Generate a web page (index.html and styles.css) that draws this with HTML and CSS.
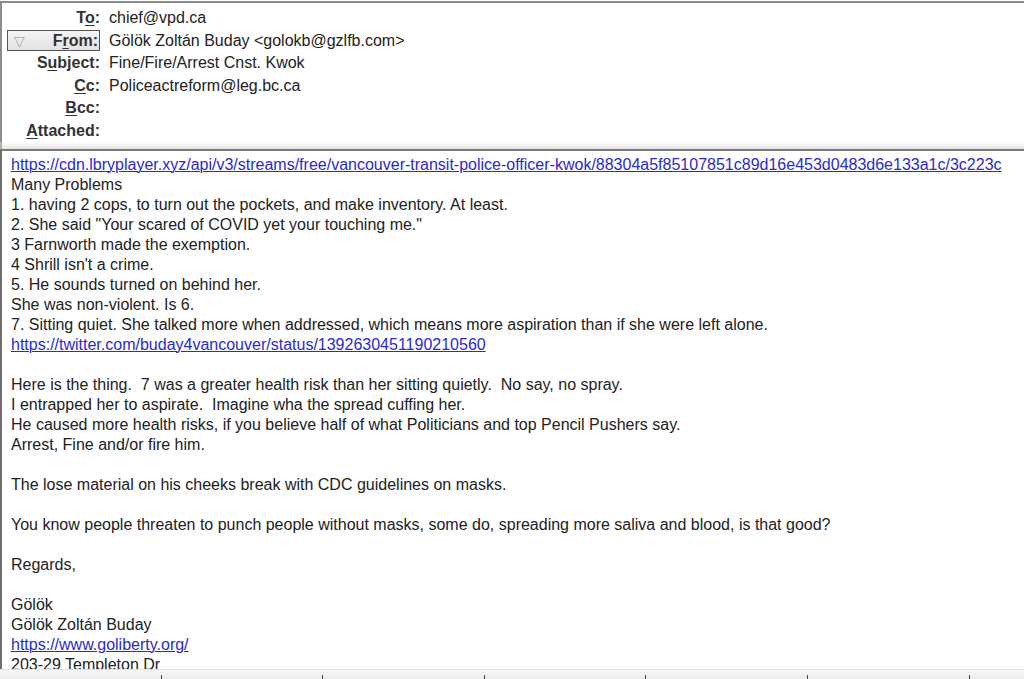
FILE: index.html
```html
<!DOCTYPE html>
<html>
<head>
<meta charset="utf-8">
<link rel="stylesheet" href="styles.css">
</head>
<body>
<div class="page">
  <div class="header">
    <div class="row"><div class="label">T<u>o</u>:</div><div class="value">chief@vpd.ca</div></div>
    <div class="row"><div class="label from"><span class="tri">&#9661;</span><span>F<u>r</u>om:</span></div><div class="value">Gölök Zoltán Buday &lt;golokb@gzlfb.com&gt;</div></div>
    <div class="row"><div class="label">S<u>u</u>bject:</div><div class="value">Fine/Fire/Arrest Cnst. Kwok</div></div>
    <div class="row"><div class="label"><u>C</u>c:</div><div class="value">Policeactreform@leg.bc.ca</div></div>
    <div class="row"><div class="label"><u>B</u>cc:</div><div class="value"></div></div>
    <div class="row"><div class="label"><u>A</u>ttached:</div><div class="value"></div></div>
  </div>
  <div class="sep"></div>
  <div class="body">
    <div class="line"><a class="link">https://cdn.lbryplayer.xyz/api/v3/streams/free/vancouver-transit-police-officer-kwok/88304a5f85107851c89d16e453d0483d6e133a1c/3c223c</a></div>
    <div class="line">Many Problems</div>
    <div class="line">1. having 2 cops, to turn out the pockets, and make inventory. At least.</div>
    <div class="line">2. She said "Your scared of COVID yet your touching me."</div>
    <div class="line">3 Farnworth made the exemption.</div>
    <div class="line">4 Shrill isn't a crime.</div>
    <div class="line">5. He sounds turned on behind her.</div>
    <div class="line">She was non-violent. Is 6.</div>
    <div class="line">7. Sitting quiet. She talked more when addressed, which means more aspiration than if she were left alone.</div>
    <div class="line"><a class="link">https://twitter.com/buday4vancouver/status/1392630451190210560</a></div>
    <div class="line"></div>
    <div class="line">Here is the thing.&nbsp; 7 was a greater health risk than her sitting quietly.&nbsp; No say, no spray.</div>
    <div class="line">I entrapped her to aspirate.&nbsp; Imagine wha the spread cuffing her.</div>
    <div class="line">He caused more health risks, if you believe half of what Politicians and top Pencil Pushers say.</div>
    <div class="line">Arrest, Fine and/or fire him.</div>
    <div class="line"></div>
    <div class="line">The lose material on his cheeks break with CDC guidelines on masks.</div>
    <div class="line"></div>
    <div class="line">You know people threaten to punch people without masks, some do, spreading more saliva and blood, is that good?</div>
    <div class="line"></div>
    <div class="line">Regards,</div>
    <div class="line"></div>
    <div class="line">Gölök</div>
    <div class="line">Gölök Zoltán Buday</div>
    <div class="line"><a class="link">https://www.goliberty.org/</a></div>
    <div class="line">203-29 Templeton Dr</div>
  </div>
  <div class="status">
    <div class="seg"><span class="tick"></span></div>
    <div class="seg"><span class="tick"></span></div>
    <div class="seg"><span class="tick"></span></div>
    <div class="seg"><span class="tick"></span></div>
    <div class="seg"><span class="tick"></span></div>
    <div class="seg"><span class="tick"></span></div>
    <div class="seg"></div>
  </div>
</div>
</body>
</html>
```
FILE: styles.css
```css
html, body {
  margin: 0;
  padding: 0;
  background: #ffffff;
}
.page {
  width: 1024px;
  height: 679px;
  overflow: hidden;
  display: flex;
  flex-direction: column;
  padding-top: 1px;
  box-sizing: border-box;
  font-family: "Liberation Sans", Arial, sans-serif;
  font-size: 16px;
  color: #222;
}
.header {
  height: 141px;
  box-sizing: border-box;
  border-top: 2px solid #8c8c8c;
  border-left: 2px solid #8c8c8c;
  padding-top: 4px;
  flex: 0 0 auto;
}
.row {
  display: flex;
  height: 22.5px;
  align-items: center;
}
.label {
  width: 98px;
  text-align: right;
  font-weight: bold;
  color: #333;
  flex: 0 0 auto;
}
.label u {
  text-decoration-thickness: 1px;
  text-underline-offset: 2px;
}
.label.from {
  margin-left: 5px;
  width: 93px;
  height: 21px;
  box-sizing: border-box;
  border: 1px solid #555;
  background: linear-gradient(#f4f4f4, #e2e2e2);
  display: flex;
  align-items: center;
  justify-content: space-between;
  padding: 0 1px 0 6px;
}
.tri {
  color: #a8a8a8;
  font-weight: normal;
  font-size: 14px;
}
.value {
  margin-left: 9px;
  white-space: nowrap;
}
.sep {
  flex: 0 0 7px;
  background: linear-gradient(#ffffff, #e4e4e4);
  border-left: 2px solid #b0b0b0;
}
.body {
  flex: 1 1 auto;
  overflow: hidden;
  border-top: 2px solid #7a7a7a;
  border-left: 2px solid #6f6f6f;
  padding: 4px 0 0 9px;
  min-height: 0;
}
.line {
  height: 20px;
  line-height: 20px;
  white-space: nowrap;
}
.link {
  color: #2a2ad0;
  text-decoration: underline;
  text-decoration-thickness: 1px;
}
.status {
  flex: 0 0 9px;
  display: flex;
  background: linear-gradient(#f7f7f7, #ececec);
  border-top: 1px solid #e2e2e2;
}
.seg {
  flex: 0 0 161.6px;
  display: flex;
  align-items: flex-end;
  justify-content: flex-end;
}
.tick {
  width: 1px;
  height: 4px;
  background: #444;
}
```
